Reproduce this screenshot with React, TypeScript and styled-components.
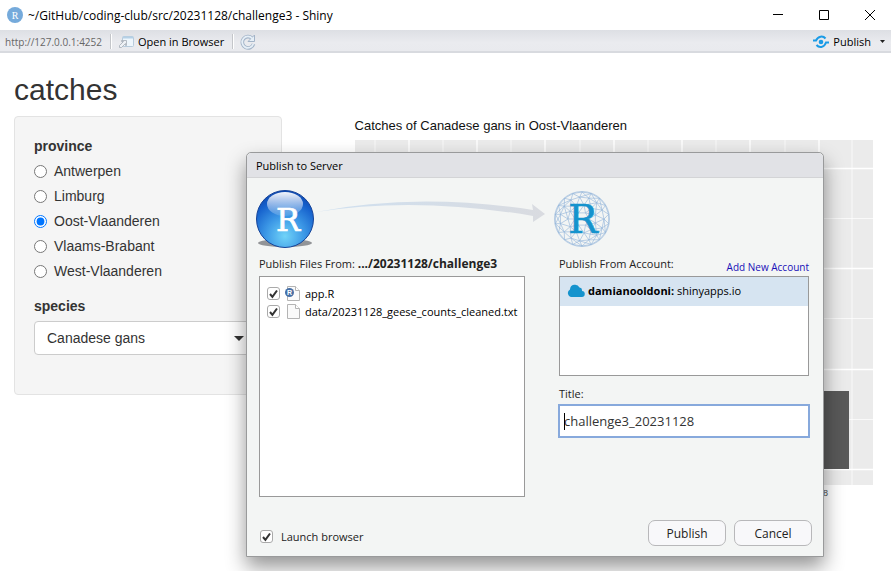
import React from "react";
import styled, { createGlobalStyle, css } from "styled-components";

const ui = `"Open Sans", "Noto Sans", sans-serif`;
const arial = `"Liberation Sans", Arial, sans-serif`;

const Global = createGlobalStyle`
  * { box-sizing: border-box; }
  html, body { margin: 0; background: #fff; overflow: hidden; }
  button, input, select { font: inherit; color: inherit; }
`;

const Window = styled.div`
  position: relative;
  min-height: 100vh;
  font-family: ${ui};
  font-size: 11px;
  color: #000;
  overflow: hidden;
`;

const TitleBar = styled.header`
  display: flex;
  align-items: center;
  height: 30px;
  padding-left: 7px;
  gap: 5px;
  font-size: 12px;
`;
const WindowTitle = styled.span`
  flex: 1;
  white-space: nowrap;
`;
const WindowButton = styled.button`
  display: grid;
  place-items: center;
  width: 46px;
  height: 30px;
  padding: 0;
  border: 0;
  background: none;
`;
const WindowButtons = styled.div`
  display: flex;
  margin-right: -2px;
`;

const Toolbar = styled.nav`
  display: flex;
  align-items: center;
  height: 23px;
  padding: 2px 5px 0 5px;
  background: linear-gradient(#dddfe4, #eaebef 60%, #e9eaee);
  border-bottom: 2px solid #d8dadf;
`;
const Address = styled.span`
  font-size: 10px;
  color: #666;
`;
const Divider = styled.span`
  width: 2px;
  height: 15px;
  margin: 0 6px 0 8px;
  border-left: 1px solid #c4c6ca;
  border-right: 1px solid #fff;
`;
const ToolButton = styled.button`
  display: flex;
  align-items: center;
  gap: 4px;
  padding: 0;
  border: 0;
  background: none;
`;
const Spacer = styled.span`
  flex: 1;
`;

const Page = styled.main`
  padding: 20px 14px 0;
  font-family: ${arial};
  font-size: 14px;
  line-height: 20px;
  color: #333;
`;
const Heading = styled.h2`
  margin: 0 0 10px;
  font-size: 30px;
  font-weight: 400;
  line-height: 33px;
`;
const Columns = styled.div`
  display: grid;
  grid-template-columns: 31% 1fr;
  gap: 73px;
`;
const Sidebar = styled.form`
  align-self: start;
  height: 279px;
  padding: 19px;
  background: #f5f5f5;
  border: 1px solid #e3e3e3;
  border-radius: 4px;
`;
const Fieldset = styled.fieldset`
  margin: 0 0 10px;
  padding: 0;
  border: 0;
`;
const groupTitle = css`
  display: block;
  padding: 0;
  margin-bottom: 5px;
  font-weight: 700;
`;
const Legend = styled.legend`${groupTitle}`;
const FieldLabel = styled.label`${groupTitle}`;
const RadioRow = styled.label`
  display: flex;
  align-items: center;
  gap: 7px;
  height: 20px;
  margin-bottom: 5px;
`;
const Radio = styled.input`
  width: 13px;
  height: 13px;
  margin: 0;
  accent-color: #0075ff;
`;
const SelectBox = styled.div`
  display: grid;
  align-items: center;
  > * { grid-area: 1 / 1; }
  > svg { justify-self: end; margin-right: 18px; pointer-events: none; }
`;
const Select = styled.select`
  appearance: none;
  width: 100%;
  height: 34px;
  padding: 6px 12px;
  background: #fff;
  border: 1px solid #ccc;
  border-radius: 4px;
`;

const Plot = styled.figure`
  margin: 0;
`;
const PlotTitle = styled.figcaption`
  height: 24px;
  font-size: 13px;
  color: #111;
  white-space: nowrap;
`;
const PlotSvg = styled.svg`
  display: block;
`;

const Dialog = styled.section`
  position: absolute;
  left: 246px;
  top: 152px;
  width: 578px;
  background: #f3f5f4;
  border: 1px solid #999a9b;
  border-radius: 5px 5px 0 0;
  box-shadow: 0 10px 20px rgba(0, 0, 0, 0.42);
`;
const DialogTitle = styled.h1`
  margin: 0;
  height: 25px;
  padding: 0 9px;
  font-size: 11px;
  font-weight: 400;
  line-height: 25px;
  background: #e1e2e6;
  border-bottom: 1px solid #d3d4d6;
  border-radius: 5px 5px 0 0;
`;
const DialogBody = styled.div`
  padding: 5px 13px 10px 12px;
`;
const Banner = styled.div`
  height: 71px;
  margin-left: -13px;
`;
const Panes = styled.div`
  display: grid;
  grid-template-columns: 266px 250px;
  justify-content: space-between;
  margin-right: 1px;
`;
const PaneHead = styled.div`
  display: flex;
  justify-content: space-between;
  height: 22px;
  line-height: 20px;
  white-space: nowrap;
`;
const Caption = styled.span`
  color: #222;
  > b { font-size: 12px; }
`;
const AccountLink = styled.a`
  align-self: end;
  font-size: 10px;
  line-height: 18px;
  color: #1a10b8;
  text-decoration: none;
`;
const FileList = styled.div`
  height: 221px;
  padding: 7px;
  overflow: hidden;
  background: #fff;
  border: 1px solid #999;
`;
const FileRow = styled.label`
  display: flex;
  align-items: center;
  height: 18px;
  white-space: nowrap;
  > svg { flex: none; margin: 0 4px 0 5px; }
`;
const Check = styled.input`
  appearance: none;
  flex: none;
  width: 13px;
  height: 13px;
  margin: 0;
  background: #fff;
  border: 1px solid #aaa;
  border-radius: 3px;
`;
const CheckWrap = styled.span`
  display: grid;
  flex: none;
  > * { grid-area: 1 / 1; }
  > svg { pointer-events: none; }
`;
const AccountList = styled.div`
  height: 100px;
  background: #fff;
  border: 1px solid #999;
`;
const Account = styled.button`
  display: flex;
  align-items: center;
  gap: 3px;
  width: 100%;
  height: 29px;
  padding: 0 7px 2px;
  background: #d6e4f1;
  border: 0;
`;
const TitleLabel = styled.label`
  display: block;
  margin-top: 8px;
  line-height: 20px;
  color: #222;
`;
const TitleField = styled.div`
  display: grid;
  align-items: center;
  margin: 0 -1px;
  > * { grid-area: 1 / 1; }
`;
const TitleInput = styled.input`
  width: 100%;
  height: 34px;
  padding: 0 4px;
  font-size: 13px;
  color: #333;
  background: #fff;
  border: 2px solid #87a9dc;
  outline: 0;
`;
const Caret = styled.span`
  width: 1px;
  height: 17px;
  margin-left: 6px;
  background: #000;
`;
const Footer = styled.footer`
  display: flex;
  align-items: center;
  gap: 8px;
  margin: 23px -2px 0 0;
`;
const Launch = styled.label`
  display: flex;
  align-items: center;
  gap: 8px;
  flex: 1;
  padding: 6px 1px 0;
  color: #222;
`;
const ActionButton = styled.button`
  width: 78px;
  height: 26px;
  padding: 0;
  font-size: 12px;
  color: #222;
  background: #f8f8fa;
  border: 1px solid #b8b8ba;
  border-radius: 7px;
`;

function Tick() {
  return (
    <CheckWrap>
      <Check type="checkbox" defaultChecked />
      <svg width="13" height="13" viewBox="0 0 13 13"><path d="M3 7l2.4 2.8L10 3.5" fill="none" stroke="#333" strokeWidth="2" /></svg>
    </CheckWrap>
  );
}

const FileIcon = ({ r }: { r?: boolean }) => (
  <svg width="16" height="16" viewBox="0 0 16 16">
    <path d="M2.500 1.500h8l4 4v10h-12z" fill="#fafafa" stroke="#b4b4b4" />
    <path d="M10.500 1.500v4h4" fill="#fff" stroke="#b4b4b4" />
    {r && <><circle cx="4.500" cy="7.500" r="4.500" fill="#466fa6" /><text x="4.500" y="10" textAnchor="middle" fontSize="7" fontWeight="700" fill="#fff" fontFamily="Liberation Sans, sans-serif">R</text></>}
  </svg>
);

const minorX = [20, 88, 156, 225, 293, 361, 430, 497];
const majorX = [54, 122, 190, 259, 327, 395, 464];

function Chart() {
  return (
    <PlotSvg width="519" height="364" viewBox="0 0 519 364">
      <rect width="518" height="345" fill="#ebebeb" />
      <g stroke="#fff">
        {minorX.map((x) => <path key={x} d={`M${x} 0v345`} strokeWidth=".7" />)}
        {[78, 178, 279].map((y) => <path key={y} d={`M0 ${y + 0.5}h518`} strokeWidth=".7" />)}
        {majorX.map((x) => <path key={x} d={`M${x} 0v345`} strokeWidth="1.4" />)}
        {[28, 128, 229, 329].map((y) => <path key={y} d={`M0 ${y + 0.5}h518`} strokeWidth="1.4" />)}
      </g>
      <rect x="434" y="251" width="60" height="78" fill="#595959" />
      <text x="463" y="356" textAnchor="middle" fontSize="9" fill="#4d4d4d">2018</text>
    </PlotSvg>
  );
}

function Mesh() {
  const rings = [[6, 7], [11, 14], [15, 22], [18, 27]];
  const pts = rings.map(([n, r], k) =>
    Array.from({ length: n }, (_, i) => {
      const a = ((i + (k % 2) * 0.5) / n) * Math.PI * 2;
      return [336 + r * Math.cos(a), 36 + r * Math.sin(a)];
    })
  );
  const line = (a: number[], b: number[]) => `M${a[0].toFixed(1)} ${a[1].toFixed(1)}L${b[0].toFixed(1)} ${b[1].toFixed(1)}`;
  let d = "";
  pts.forEach((ring, k) => {
    ring.forEach((p, i) => {
      d += line(p, ring[(i + 1) % ring.length]);
      if (k < pts.length - 1) {
        [...pts[k + 1]]
          .sort((a, b) => Math.hypot(a[0] - p[0], a[1] - p[1]) - Math.hypot(b[0] - p[0], b[1] - p[1]))
          .slice(0, 3)
          .forEach((q) => { d += line(p, q); });
      }
    });
  });
  return <g fill="none" stroke="#8fb2d8" strokeWidth=".6"><path d={d} /><circle cx="336" cy="36" r="27.500" /></g>;
}

function Illustration() {
  return (
    <svg width="370" height="68" viewBox="0 0 370 68">
      <defs>
        <radialGradient id="ball" cx=".5" cy=".8" r=".85">
          <stop offset="0" stopColor="#70d3f8" /><stop offset=".4" stopColor="#3c98e6" /><stop offset=".75" stopColor="#1560cc" /><stop offset="1" stopColor="#0a3fa4" />
        </radialGradient>
        <linearGradient id="gloss" x2="0" y2="1"><stop stopColor="#fff" stopOpacity=".95" /><stop offset="1" stopColor="#fff" stopOpacity=".12" /></linearGradient>
        <linearGradient id="arrow"><stop stopColor="#cfe0f0" /><stop offset="1" stopColor="#d9dbe0" /></linearGradient>
      </defs>
      <ellipse cx="39" cy="60" rx="27" ry="4" fill="#929497" />
      <circle cx="39" cy="36" r="28.500" fill="url(#ball)" stroke="#164499" />
      <ellipse cx="39" cy="21" rx="18" ry="12" fill="url(#gloss)" />
      <text x="42" y="48" textAnchor="middle" fontFamily="DejaVu Serif, serif" fontSize="32" fill="#fff" stroke="#fff" strokeWidth=".7">R</text>
      <path d="M70 29Q170 9 287 27l-1-6 13 10-12 8 0-6Q170 13 70 29z" fill="url(#arrow)" />
      <Mesh />
      <text x="337" y="50" textAnchor="middle" fontFamily="DejaVu Serif, serif" fontSize="39" fill="#1593cd" stroke="#1593cd" strokeWidth=".6">R</text>
    </svg>
  );
}

export default function App() {
  return (
    <Window>
      <Global />
      <TitleBar>
        <svg width="16" height="16" viewBox="0 0 16 16"><circle cx="8" cy="8" r="8" fill="#75aadb" /><text x="8" y="11.500" textAnchor="middle" fontFamily="Liberation Serif, serif" fontSize="10" fill="#fff">R</text></svg>
        <WindowTitle>~/GitHub/coding-club/src/20231128/challenge3 - Shiny</WindowTitle>
        <WindowButtons>
          <WindowButton aria-label="Minimize"><svg width="10" height="10"><path d="M0 4.500h10" stroke="#000" /></svg></WindowButton>
          <WindowButton aria-label="Maximize"><svg width="10" height="10"><path d="M.5.5h9v9h-9z" fill="none" stroke="#000" /></svg></WindowButton>
          <WindowButton aria-label="Close"><svg width="10" height="10"><path d="M0 0l10 10M10 0L0 10" stroke="#000" /></svg></WindowButton>
        </WindowButtons>
      </TitleBar>
      <Toolbar>
        <Address>http://127.0.0.1:4252</Address>
        <Divider />
        <ToolButton>
          <svg width="16" height="14" viewBox="0 0 16 14"><rect x="4.500" y="1.500" width="11" height="10" rx="1" fill="#eef6fc" stroke="#b7cbdc" /><path d="M5 2.500h10" stroke="#b5d0e6" strokeWidth="2" /><path d="M1.500 12.500v-2l4-4h-2v-1h5v5h-1v-2l-4 4z" fill="#eef1f5" stroke="#a4acb5" strokeWidth=".8" /></svg>
          Open in Browser
        </ToolButton>
        <Divider />
        <ToolButton aria-label="Reload">
          <svg width="16" height="16" viewBox="0 0 16 16"><path d="M12 4.200A5.700 5.700 0 1 0 13.500 10" fill="none" stroke="#a3b4c8" strokeWidth="3.600" /><path d="M14.500 1v6.500H8z" fill="#e6eff7" stroke="#a3b4c8" /><path d="M12.300 4.500A5.700 5.700 0 1 0 13.300 10" fill="none" stroke="#e6eff7" strokeWidth="1.800" /></svg>
        </ToolButton>
        <Spacer />
        <ToolButton>
          <svg width="16" height="14" viewBox="0 0 16 14"><circle cx="8" cy="7" r="2.300" fill="#1a9be6" /><path d="M0 5.500h3C5 1 10 .5 12.500 3.500M16 7.500h-3C11 13 6 13 3.500 10" fill="none" stroke="#1a9be6" strokeWidth="2" /></svg>
          Publish
        </ToolButton>
        <ToolButton aria-label="Publish options"><svg width="15" height="6"><path d="M9 1h5l-2.500 3z" fill="#222" /></svg></ToolButton>
      </Toolbar>
      <Page>
        <Heading>catches</Heading>
        <Columns>
          <Sidebar>
            <Fieldset>
              <Legend>province</Legend>
              {["Antwerpen", "Limburg", "Oost-Vlaanderen", "Vlaams-Brabant", "West-Vlaanderen"].map((name) => (
                <RadioRow key={name}><Radio type="radio" name="province" defaultChecked={name === "Oost-Vlaanderen"} />{name}</RadioRow>
              ))}
            </Fieldset>
            <FieldLabel htmlFor="species">species</FieldLabel>
            <SelectBox>
              <Select id="species"><option>Canadese gans</option></Select>
              <svg width="10" height="5"><path d="M0 0h10L5 5z" fill="#333" /></svg>
            </SelectBox>
          </Sidebar>
          <Plot>
            <PlotTitle>Catches of Canadese gans in Oost-Vlaanderen</PlotTitle>
            <Chart />
          </Plot>
        </Columns>
      </Page>
      <Dialog role="dialog" aria-labelledby="dialog-title">
        <DialogTitle id="dialog-title">Publish to Server</DialogTitle>
        <DialogBody>
          <Banner><Illustration /></Banner>
          <Panes>
            <div>
              <PaneHead><Caption>Publish Files From: <b>.../20231128/challenge3</b></Caption></PaneHead>
              <FileList>
                <FileRow><Tick /><FileIcon r />app.R</FileRow>
                <FileRow><Tick /><FileIcon />data/20231128_geese_counts_cleaned.txt</FileRow>
              </FileList>
            </div>
            <div>
              <PaneHead><Caption>Publish From Account:</Caption><AccountLink href="#">Add New Account</AccountLink></PaneHead>
              <AccountList>
                <Account>
                  <svg width="18" height="14" viewBox="0 0 18 14"><path d="M4.500 13a4 4 0 0 1-1.500-7.500A5 5 0 0 1 12.500 3.500a3 3 0 0 1 2.500 3.500 3 3 0 0 1-.5 6z" fill="#1593cd" /></svg>
                  <span><b>damianooldoni:</b> shinyapps.io</span>
                </Account>
              </AccountList>
              <TitleLabel htmlFor="title">Title:</TitleLabel>
              <TitleField>
                <TitleInput id="title" defaultValue="challenge3_20231128" />
                <Caret />
              </TitleField>
            </div>
          </Panes>
          <Footer>
            <Launch><Tick />Launch browser</Launch>
            <ActionButton>Publish</ActionButton>
            <ActionButton>Cancel</ActionButton>
          </Footer>
        </DialogBody>
      </Dialog>
    </Window>
  );
}
